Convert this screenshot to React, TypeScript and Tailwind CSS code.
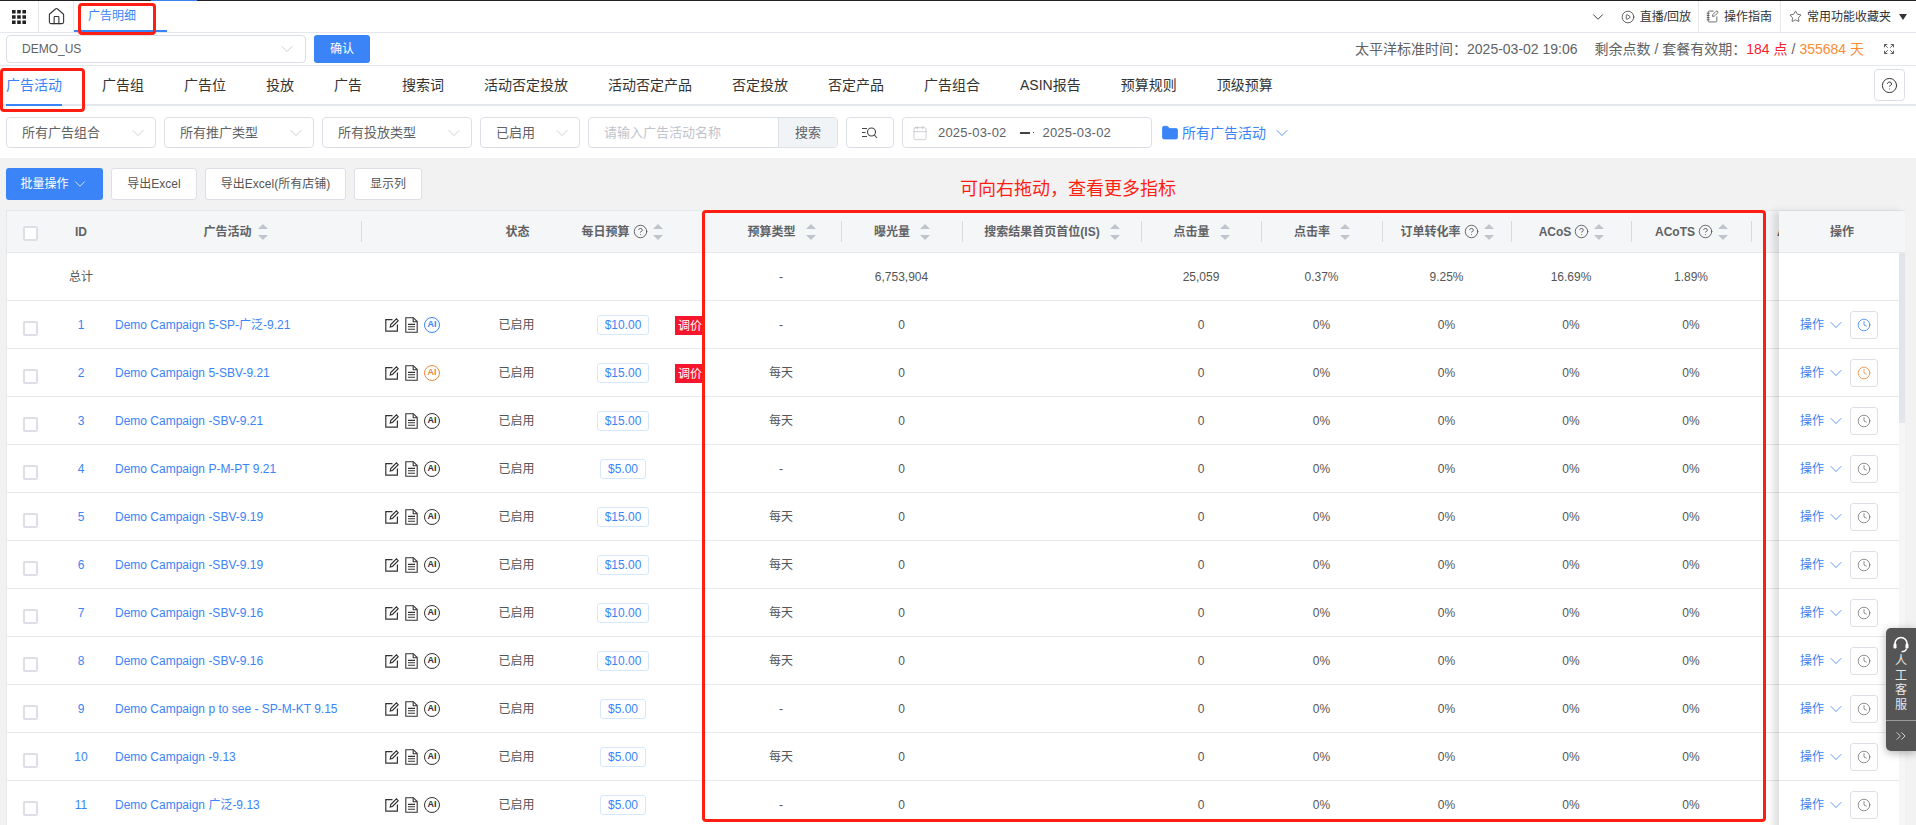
import {
  Calendar,
  ChevronDown,
  ChevronsRight,
  CircleHelp,
  CirclePlay,
  Clock,
  Expand,
  Folder,
  Home,
  NotebookPen,
  Star,
} from 'lucide-react'

const BLUE = '#3a84f7'

const TABS = ['广告组', '广告位', '投放', '广告', '搜索词', '活动否定投放', '活动否定产品', '否定投放', '否定产品', '广告组合', 'ASIN报告', '预算规则', '顶级预算']

const ROWS = [
  { id: 1, name: 'Demo Campaign 5-SP-广泛-9.21', budget: '$10.00', type: '-', adjust: true, tone: 'blue' },
  { id: 2, name: 'Demo Campaign 5-SBV-9.21', budget: '$15.00', type: '每天', adjust: true, tone: 'orange' },
  { id: 3, name: 'Demo Campaign -SBV-9.21', budget: '$15.00', type: '每天', tone: 'gray' },
  { id: 4, name: 'Demo Campaign P-M-PT 9.21', budget: '$5.00', type: '-', tone: 'gray' },
  { id: 5, name: 'Demo Campaign -SBV-9.19', budget: '$15.00', type: '每天', tone: 'gray' },
  { id: 6, name: 'Demo Campaign -SBV-9.19', budget: '$15.00', type: '每天', tone: 'gray' },
  { id: 7, name: 'Demo Campaign -SBV-9.16', budget: '$10.00', type: '每天', tone: 'gray' },
  { id: 8, name: 'Demo Campaign -SBV-9.16', budget: '$10.00', type: '每天', tone: 'gray' },
  { id: 9, name: 'Demo Campaign p to see - SP-M-KT 9.15', budget: '$5.00', type: '-', tone: 'gray' },
  { id: 10, name: 'Demo Campaign -9.13', budget: '$5.00', type: '每天', tone: 'gray' },
  { id: 11, name: 'Demo Campaign 广泛-9.13', budget: '$5.00', type: '-', tone: 'gray' },
]

const TONE: Record<string, { ai: string; clock: string }> = {
  blue: { ai: 'border-[#3a84f7] text-[#3a84f7]', clock: '#3a84f7' },
  orange: { ai: 'border-[#ee8a3c] text-[#ee8a3c]', clock: '#ee8a3c' },
  gray: { ai: 'border-[#333] text-[#333]', clock: '#777' },
}

/** Metric columns, left to right. The next column after these is cut off by the fixed one */
const METRICS = [
  { w: 'w-[121px]', title: '曝光量', total: '6,753,904', value: '0' },
  { w: 'w-[179px]', title: '搜索结果首页首位(IS)', total: '', value: '' },
  { w: 'w-[120px]', title: '点击量', total: '25,059', value: '0' },
  { w: 'w-[121px]', title: '点击率', total: '0.37%', value: '0%' },
  { w: 'w-[129px]', title: '订单转化率', total: '9.25%', value: '0%', help: true },
  { w: 'w-[120px]', title: 'ACoS', total: '16.69%', value: '0%', help: true },
  { w: 'w-[120px]', title: 'ACoTS', total: '1.89%', value: '0%', help: true },
]

function Sort({ className = 'ml-[10px]' }: { className?: string }) {
  return (
    <svg width="10" height="16" viewBox="0 0 10 16" className={`shrink-0 ${className}`} fill="#c0c4cc">
      <path d="M5 0 L10 5 H0 Z" />
      <path d="M0 11 H10 L5 16 Z" />
    </svg>
  )
}

function Help() {
  return <CircleHelp size={15} strokeWidth={1.4} className="ml-[3px] shrink-0 text-[#555]" />
}

function SelectBox({ label, className }: { label: string; className: string }) {
  return (
    <div className={`flex h-[31px] items-center justify-between rounded border border-[#dcdfe6] bg-white pl-[15px] pr-[7px] text-[13px] text-[#606266] ${className}`}>
      <span>{label}</span>
      <ChevronDown size={20} strokeWidth={1} className="text-[#c0c4cc]" />
    </div>
  )
}

function ToolButton({ label, className }: { label: string; className: string }) {
  return (
    <button className={`flex h-[32px] items-center justify-center rounded-[3px] border border-[#dcdfe6] bg-white text-xs text-[#555] ${className}`}>
      {label}
    </button>
  )
}

function HeadCell({ w, title, help, sort = true, line = true }: { w: string; title: string; help?: boolean; sort?: boolean; line?: boolean }) {
  return (
    <div className={`flex shrink-0 items-center ${w}`}>
      <div className={`flex h-[21px] w-full items-center justify-center ${line ? 'border-r border-[#d8dade]' : ''}`}>
        <span className="whitespace-nowrap">{title}</span>
        {help && <Help />}
        {sort && <Sort className={help ? 'ml-[5px]' : 'ml-[10px]'} />}
      </div>
    </div>
  )
}

function Checkbox() {
  return <span className="block h-[15px] w-[15px] rounded-[2px] border-2 border-[#dcdfe6] bg-white" />
}

function EditIcon() {
  return (
    <svg width="14" height="14" viewBox="0 0 14 14" fill="none" stroke="#333" strokeWidth="1.2">
      <path d="M7.5 1.6 H0.8 V13.2 H12.4 V6.5" />
      <path d="M5.2 9 L5.7 6.6 L11.4 0.9 L13.2 2.7 L7.5 8.4 Z" />
    </svg>
  )
}

function DocIcon() {
  return (
    <svg width="13" height="16" viewBox="0 0 13 16" fill="none" stroke="#333" strokeWidth="1.1">
      <path d="M0.8 0.7 H8.4 L12.2 4.5 V15.3 H0.8 Z" />
      <path d="M8.2 0.7 V4.7 H12.2" />
      <path d="M3 7.4 H10 M3 9.8 H10 M3 12.2 H10" />
    </svg>
  )
}

function ListSearchIcon() {
  return (
    <svg width="16" height="12" viewBox="0 0 16 12" fill="none" stroke="#444" strokeWidth="1.1">
      <path d="M0 1.5 H5 M0 5.5 H3.5 M0 9.5 H5" />
      <circle cx="9.5" cy="5" r="4" />
      <path d="M12.4 8 L15 11" />
    </svg>
  )
}

function HeadsetIcon() {
  return (
    <svg width="16" height="17" viewBox="0 0 16 17" fill="none" stroke="#fff" className="mt-[8px]">
      <path d="M2 9 V7.5 a6 6 0 0 1 12 0 V9" strokeWidth="1.6" />
      <rect x="0.5" y="7.5" width="3" height="5" rx="1.2" fill="#fff" strokeWidth="0" />
      <rect x="12.5" y="7.5" width="3" height="5" rx="1.2" fill="#fff" strokeWidth="0" />
      <path d="M13.5 12.5 C13 15 11 15.6 8.5 15.6" strokeWidth="1.3" />
    </svg>
  )
}

function BudgetCell({ budget, adjust }: { budget: string; adjust?: boolean }) {
  return (
    <div className="relative flex w-[160px] shrink-0 items-center self-stretch">
      <div className="flex w-[122px] justify-center pl-[2px]">
        <span className="rounded-[3px] border border-[#d5e6fd] px-[7px] leading-[18px] text-[#3a84f7]">{budget}</span>
      </div>
      {adjust && (
        <span className="absolute left-[114px] top-[15px] flex h-[19px] w-[30px] items-center justify-center bg-[#f5162e] text-white">调价</span>
      )}
    </div>
  )
}

function TableHead() {
  return (
    <div className="flex h-[42px] w-max items-center border-b border-[#e6e8ec] bg-[#f5f6f7] font-semibold text-[#606266]">
      <div className="w-[40px] shrink-0 pl-[16px] pt-[3px]">
        <Checkbox />
      </div>
      <div className="w-[68px] shrink-0 text-center">ID</div>
      <div className="flex w-[247px] shrink-0 items-center">
        <div className="flex h-[21px] w-full items-center justify-center border-r border-[#d8dade] pr-[5px]">
          广告活动
          <Sort className="ml-[6px]" />
        </div>
      </div>
      <HeadCell w="w-[111px]" title="" sort={false} line={false} />
      <HeadCell w="w-[89px]" title="状态" sort={false} line={false} />
      <div className="flex w-[160px] shrink-0 items-center">
        <div className="flex w-[120px] items-center justify-center">
          每日预算
          <Help />
          <Sort className="ml-[5px]" />
        </div>
      </div>
      <HeadCell w="w-[120px]" title="预算类型" />
      {METRICS.map((m) => (
        <HeadCell key={m.title} w={m.w} title={m.title} help={m.help} />
      ))}
      <div className="w-[120px] shrink-0 pl-[25px]">ASIN</div>
    </div>
  )
}

function TotalRow() {
  return (
    <div className="flex h-[48px] w-max items-center border-b border-[#e6e8ec] text-[#555]">
      <div className="w-[40px] shrink-0" />
      <div className="w-[68px] shrink-0 text-center">总计</div>
      <div className="w-[606px] shrink-0" />
      <div className="w-[120px] shrink-0 text-center">-</div>
      {METRICS.map((m) => (
        <div key={m.title} className={`shrink-0 text-center ${m.w}`}>
          {m.total}
        </div>
      ))}
      <div className="w-[120px] shrink-0" />
    </div>
  )
}

function CampaignRow({ row }: { row: (typeof ROWS)[number] }) {
  return (
    <div className="flex h-[48px] w-max items-center border-b border-[#e6e8ec] text-[#555]">
      <div className="w-[40px] shrink-0 pl-[16px] pt-[8px]">
        <Checkbox />
      </div>
      <div className="w-[68px] shrink-0 text-center text-[#3a84f7]">{row.id}</div>
      <div className="w-[246px] shrink-0 whitespace-nowrap text-[#3a84f7]">{row.name}</div>
      <div className="flex w-[111px] shrink-0 items-center gap-[6px] pl-[24px]">
        <EditIcon />
        <DocIcon />
        <span className={`flex h-[16px] w-[16px] items-center justify-center rounded-full border-[1.5px] text-[9px] font-bold leading-none ${TONE[row.tone].ai}`}>AI</span>
      </div>
      <div className="w-[89px] shrink-0 text-center">已启用</div>
      <BudgetCell budget={row.budget} adjust={row.adjust} />
      <div className="w-[120px] shrink-0 text-center">{row.type}</div>
      {METRICS.map((m) => (
        <div key={m.title} className={`shrink-0 text-center ${m.w}`}>
          {m.value}
        </div>
      ))}
      <div className="w-[120px] shrink-0" />
    </div>
  )
}

function ActionColumn() {
  return (
    <div className="relative z-10 w-[126px] shrink-0 bg-white shadow-[-6px_0_7px_rgba(0,0,0,0.12)]">
      <div className="flex h-[42px] items-center justify-center border-b border-[#e6e8ec] bg-[#f5f6f7] font-semibold text-[#606266]">操作</div>
      <div className="flex">
        <div className="w-[120px]">
          <div className="h-[48px] border-b border-[#e6e8ec]" />
          {ROWS.map((row) => (
            <div key={row.id} className="flex h-[48px] items-center border-b border-[#e6e8ec] pl-[21px] text-[#3a84f7]">
              <span>操作</span>
              <ChevronDown size={20} strokeWidth={1} className="-mx-[5px] ml-[2px]" />
              <span className="ml-[9px] flex h-[28px] w-[28px] items-center justify-center rounded-[3px] border border-[#dcdfe6]">
                <Clock size={14} strokeWidth={1.4} color={TONE[row.tone].clock} />
              </span>
            </div>
          ))}
        </div>
        <div className="h-[573px] w-[6px] bg-[#f6f6f6]">
          <div className="h-[170px] w-full bg-[#e2e5e9]" />
        </div>
      </div>
    </div>
  )
}

export default function App() {
  return (
    <div
      className="relative h-[825px] w-[1916px] overflow-hidden bg-[#f2f2f2] text-xs text-[#333]"
      style={{ fontFamily: '"Liberation Sans", "Noto Sans CJK SC", sans-serif' }}
    >
      {/* Top bar */}
      <div className="flex h-[33px] items-stretch border-b border-t border-b-[#e4e7ed] border-t-[#222] bg-white">
        <div className="flex w-[39px] items-center justify-center border-r border-[#e8e8e8]">
          <svg width="14" height="14" viewBox="0 0 14 14" fill="#222">
            <path d="M0 0h3.6v3.6H0z M5.2 0h3.6v3.6H5.2z M10.4 0H14v3.6h-3.6z M0 5.2h3.6v3.6H0z M5.2 5.2h3.6v3.6H5.2z M10.4 5.2H14v3.6h-3.6z M0 10.4h3.6V14H0z M5.2 10.4h3.6V14H5.2z M10.4 10.4H14V14h-3.6z" />
          </svg>
        </div>
        <div className="flex w-[35px] items-center justify-center border-r border-[#e8e8e8]">
          <Home size={19} strokeWidth={1.4} />
        </div>
        <div className="flex w-[93px] items-center border-b-2 border-[#3a84f7] pl-[14px] text-[#3a84f7]">广告明细</div>
        <div className="flex-1" />
        <div className="flex items-center pr-[9px]">
          <ChevronDown size={18} strokeWidth={1.25} className="mr-[14px]" />
          <CirclePlay size={14} strokeWidth={1.3} />
          <span className="ml-[5px]">直播/回放</span>
          <span className="mx-[7px] h-full w-px bg-[#e8e8e8]" />
          <NotebookPen size={13} strokeWidth={1.3} />
          <span className="ml-[5px]">操作指南</span>
          <span className="mx-[8px] h-full w-px bg-[#e8e8e8]" />
          <Star size={13} strokeWidth={1.3} />
          <span className="ml-[5px]">常用功能收藏夹</span>
          <svg width="8" height="6" viewBox="0 0 8 6" className="ml-[8px]" fill="#333">
            <path d="M0 0H8L4 6Z" />
          </svg>
        </div>
      </div>

      {/* Store picker */}
      <div className="flex h-[33px] items-center border-b border-[#e4e7ed] bg-white pl-[6px] pb-px">
        <div className="flex h-[28px] w-[300px] items-center justify-between rounded border border-[#dcdfe6] pl-[15px] pr-[8px] text-[#606266]">
          <span>DEMO_US</span>
          <ChevronDown size={20} strokeWidth={1} className="text-[#c0c4cc]" />
        </div>
        <button className="ml-[8px] flex h-[28px] w-[56px] items-center justify-center rounded-[3px] bg-[#3a84f7] text-white">确认</button>
        <div className="flex-1" />
        <div className="flex items-center whitespace-nowrap pr-[21px] text-sm text-[#606266]">
          <span>太平洋标准时间：2025-03-02 19:06</span>
          <span className="ml-[17px]">剩余点数 / 套餐有效期：</span>
          <span className="text-[#f5222d]">184 点</span>
          <span className="mx-[4px]">/</span>
          <span className="text-[#fa8c35]">355684 天</span>
          <Expand size={12} strokeWidth={2} className="ml-[19px]" />
        </div>
      </div>

      {/* Tabs */}
      <div className="flex h-[40px] items-center border-b-2 border-[#e4e7ed] bg-white pl-[6px] text-sm">
        <div className="relative mr-[40px] flex h-[38px] items-center text-[#3a84f7]">
          广告活动
          <span className="absolute -bottom-[2px] left-0 h-[2px] w-full bg-[#3a84f7]" />
        </div>
        <div className="flex gap-[40px]">
          {TABS.map((t) => (
            <span key={t} className="whitespace-nowrap">
              {t}
            </span>
          ))}
        </div>
        <div className="flex-1" />
        <div className="mr-[11px] flex h-[32px] w-[31px] items-center justify-center rounded border border-[#dcdfe6]">
          <CircleHelp size={17} strokeWidth={1.4} />
        </div>
      </div>

      {/* Filters */}
      <div className="flex h-[52px] gap-[8px] bg-white pl-[6px] pt-[11px]">
        <SelectBox label="所有广告组合" className="w-[150px]" />
        <SelectBox label="所有推广类型" className="w-[150px]" />
        <SelectBox label="所有投放类型" className="w-[150px]" />
        <SelectBox label="已启用" className="w-[100px]" />
        <div className="flex h-[31px] w-[250px] rounded border border-[#dcdfe6] text-[13px]">
          <span className="flex w-[189px] items-center pl-[15px] text-[#c0c4cc]">请输入广告活动名称</span>
          <span className="flex flex-1 items-center justify-center border-l border-[#dcdfe6] bg-[#f1f4f7] text-[#606266]">搜索</span>
        </div>
        <div className="flex h-[31px] w-[48px] items-center justify-center rounded border border-[#dcdfe6]">
          <ListSearchIcon />
        </div>
        <div className="flex h-[31px] w-[250px] items-center rounded border border-[#dcdfe6] pl-[9px] text-[13px] text-[#606266]">
          <Calendar size={16} strokeWidth={1} className="text-[#b4b8bf]" />
          <span className="ml-[10px] tracking-[0.2px]">2025-03-02</span>
          <span className="ml-[13px] h-[2px] w-[10px] bg-[#444]" />
          <span className="ml-[3px] h-px w-px bg-[#444]" />
          <span className="ml-[9px] tracking-[0.2px]">2025-03-02</span>
        </div>
        <div className="ml-px flex h-[31px] items-center text-sm text-[#3a84f7]">
          <Folder size={18} fill={BLUE} strokeWidth={1} />
          <span className="ml-[3px]">所有广告活动</span>
          <ChevronDown size={20} strokeWidth={1} className="ml-[6px]" />
        </div>
      </div>

      {/* Toolbar */}
      <div className="flex gap-[8px] pl-[6px] pt-[10px]">
        <button className="flex h-[32px] w-[97px] items-center justify-center rounded-[3px] bg-[#3a84f7] text-white">
          批量操作
          <ChevronDown size={18} strokeWidth={1} className="ml-[2px]" />
        </button>
        <ToolButton label="导出Excel" className="w-[86px]" />
        <ToolButton label="导出Excel(所有店铺)" className="w-[141px]" />
        <ToolButton label="显示列" className="w-[68px]" />
      </div>

      {/* Table */}
      <div className="ml-[6px] mr-[11px] mt-[10px] flex h-[640px] border-l border-t border-[#e6e8ec] bg-white">
        <div className="min-w-0 flex-1 overflow-hidden">
          <TableHead />
          <TotalRow />
          {ROWS.map((row) => (
            <CampaignRow key={row.id} row={row} />
          ))}
        </div>
        <ActionColumn />
      </div>

      {/* Annotations drawn over the page */}
      <div className="pointer-events-none absolute left-[78px] top-[3px] h-[32px] w-[78px] rounded-[4px] border-[3px] border-[#ff1e12]" />
      <div className="pointer-events-none absolute left-0 top-[68px] h-[44px] w-[85px] rounded-[4px] border-[3px] border-[#ff1e12]" />
      <div className="pointer-events-none absolute left-[702px] top-[210px] h-[612px] w-[1064px] rounded-[4px] border-[3px] border-[#ff1e12]" />
      <div className="absolute left-[960px] top-[178px] text-[18px] leading-[22px] text-[#ff1e12]">可向右拖动，查看更多指标</div>
      <span className="absolute left-[151px] top-0 h-px w-[46px] bg-[#3a84f7]" />

      {/* Support widget */}
      <div className="absolute right-0 top-[628px] z-20 flex h-[123px] w-[30px] flex-col items-center rounded-l-[5px] bg-[#555] text-[#e8e8e8] shadow-[0_2px_8px_rgba(0,0,0,0.3)]">
        <HeadsetIcon />
        <div className="mt-[1px] flex h-[66px] flex-col items-center text-xs leading-[14.5px]">
          <span>人</span>
          <span>工</span>
          <span>客</span>
          <span>服</span>
        </div>
        <span className="h-px w-full bg-[#999]" />
        <ChevronsRight size={16} strokeWidth={1.25} className="mt-[7px]" />
      </div>
    </div>
  )
}
